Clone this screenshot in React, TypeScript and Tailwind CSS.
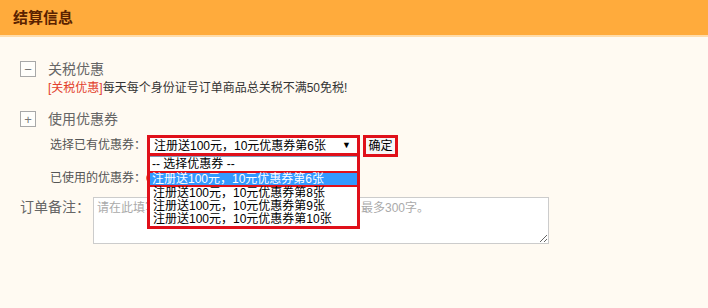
import React from "react";

const RED = "border-[#e0101a]";

function Box({ children }: { children: React.ReactNode }) {
  return (
    <span className="shrink-0 w-[16px] h-[16px] border border-[#a8a8a8] bg-[#fffefb] flex items-center justify-center text-[#777] text-[13px] leading-none font-['Liberation_Sans',sans-serif]">
      {children}
    </span>
  );
}

export default function App() {
  const opts = ["注册送100元，10元优惠券第8张", "注册送100元，10元优惠券第9张", "注册送100元，10元优惠券第10张"];
  return (
    <div className="w-[708px] min-h-[308px] bg-[#fffaf2] text-[#555] font-['Liberation_Sans','Noto_Sans_CJK_SC',sans-serif]">
      <div className="h-[37px] bg-[#ffab3c] border-b-2 border-[#ffdcaa] flex items-center pl-[13px]">
        <span className="text-[15px] font-bold text-[#5a2200] leading-none">结算信息</span>
      </div>
      <div className="pl-[20px] pt-[24px]">
        <div className="flex items-center h-[16px]">
          <Box>−</Box>
          <span className="ml-[12px] text-[14px] leading-[16px] text-[#666]">关税优惠</span>
        </div>
        <div className="mt-[4px] h-[14px] pl-[28px] text-[12px] leading-[14px] text-[#333] whitespace-nowrap">
          <span className="text-[#e2402c]">[关税优惠]</span>每天每个身份证号订单商品总关税不满50免税!
        </div>
        <div className="mt-[16px] flex items-center h-[16px]">
          <Box>+</Box>
          <span className="ml-[12px] text-[14px] leading-[16px] text-[#666]">使用优惠券</span>
        </div>
        <div className="mt-[8px] flex items-start">
          <span className="shrink-0 w-[127px] pl-[30px] text-[12px] leading-[21px] h-[21px] whitespace-nowrap">选择已有优惠券：</span>
          <div className="relative shrink-0">
            <div className={`w-[213px] h-[21px] border-[3px] ${RED} bg-white flex items-center pl-[4px] pr-[6px] text-[12px] text-black whitespace-nowrap`}>
              <span>注册送100元，10元优惠券第6张</span>
              <span className="ml-auto text-[9px]">▼</span>
            </div>
            <div className={`absolute z-10 top-full left-0 w-[213px] border-x-[3px] border-b-[3px] ${RED} bg-white text-[12px] text-black whitespace-nowrap`}>
              <div className="h-[15px] leading-[15px] pl-[2px] border-t border-[#7f9db9]">-- 选择优惠券 --</div>
              <div className="h-[2px] bg-[#e0101a]" />
              <div className="h-[12px] leading-[12px] bg-[#3399ff] text-white pl-[2px]">注册送100元，10元优惠券第6张</div>
              <div className="h-[2px] bg-[#e0101a]" />
              {opts.map((o) => (
                <div key={o} className="h-[13px] leading-[13px] pl-[3px]">{o}</div>
              ))}
            </div>
          </div>
          <div className={`shrink-0 ml-[3px] w-[35px] h-[22px] border-[3px] ${RED} bg-[#f7f7f7] flex items-center justify-center text-[12px] text-black`}>
            确定
          </div>
        </div>
        <div className="mt-[12px] flex items-center h-[18px]">
          <span className="shrink-0 w-[126px] pl-[30px] text-[12px] leading-[18px] whitespace-nowrap">已使用的优惠券：</span>
          <span className="shrink-0 w-[10px] h-[10px] rounded-full bg-[#f0602e]" />
        </div>
        <div className="mt-[10px] flex items-start">
          <span className="shrink-0 w-[73px] pt-[2px] text-[14px] leading-[16px] text-[#666] whitespace-nowrap">订单备注：</span>
          <textarea
            className="shrink-0 w-[456px] h-[47px] border border-[#cccccc] bg-white px-[3px] py-[2px] text-[12px] leading-[16px] text-[#333] placeholder:text-[#aaaaaa] outline-none"
            placeholder="请在此填写您对本次订单的特殊要求或备注信息，最多300字。"
          />
        </div>
      </div>
    </div>
  );
}
